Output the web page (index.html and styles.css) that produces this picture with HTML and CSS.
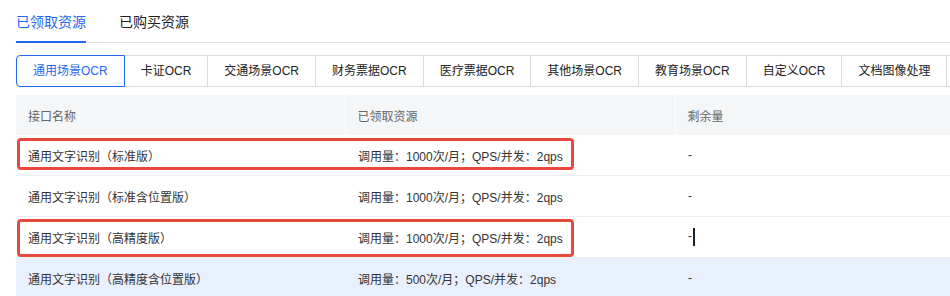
FILE: index.html
```html
<!DOCTYPE html>
<html lang="zh-CN">
<head>
    <meta charset="UTF-8">
    <title>资源管理</title>
    <link rel="stylesheet" href="styles.css">
</head>
<body>
    <div class="tabs">
        <div class="tab active">已领取资源</div>
        <div class="tab">已购买资源</div>
    </div>

    <div class="segments">
        <div class="seg active">通用场景OCR</div>
        <div class="seg">卡证OCR</div>
        <div class="seg">交通场景OCR</div>
        <div class="seg">财务票据OCR</div>
        <div class="seg">医疗票据OCR</div>
        <div class="seg">其他场景OCR</div>
        <div class="seg">教育场景OCR</div>
        <div class="seg">自定义OCR</div>
        <div class="seg">文档图像处理</div>
        <div class="seg seg-more"></div>
    </div>

    <div class="table-wrap">
        <table>
            <colgroup>
                <col class="c1">
                <col class="c2">
                <col class="c3">
            </colgroup>
            <tr>
                <th>接口名称</th>
                <th>已领取资源</th>
                <th>剩余量</th>
            </tr>
            <tr>
                <td>通用文字识别（标准版）</td>
                <td>调用量：1000次/月；QPS/并发：2qps</td>
                <td>-</td>
            </tr>
            <tr>
                <td>通用文字识别（标准含位置版）</td>
                <td>调用量：1000次/月；QPS/并发：2qps</td>
                <td>-</td>
            </tr>
            <tr>
                <td>通用文字识别（高精度版）</td>
                <td>调用量：1000次/月；QPS/并发：2qps</td>
                <td>-<span class="caret"></span></td>
            </tr>
            <tr class="hover">
                <td>通用文字识别（高精度含位置版）</td>
                <td>调用量：500次/月；QPS/并发：2qps</td>
                <td>-</td>
            </tr>
        </table>

        <!-- annotation boxes -->
        <div class="mark mark-1"></div>
        <div class="mark mark-2"></div>
    </div>
</body>
</html>
```

FILE: styles.css
```css
html, body {
    margin: 0;
    overflow: hidden;
}

body {
    width: 950px;
    height: 296px;
    padding-left: 16px;
    box-sizing: border-box;
    font-family: "Liberation Sans", "Noto Sans CJK SC", sans-serif;
    color: #333;
    background: #fff;
}

.tabs {
    display: flex;
    gap: 33px;
    width: 1000px;
    border-bottom: 1px solid #e4e4e4;
}

.tab {
    height: 43px;
    box-sizing: border-box;
    padding-top: 12px;
    margin-bottom: -1px;
    font-size: 14px;
    line-height: 20px;
    color: #222;
}

.tab.active {
    color: #2468f2;
    border-bottom: 2px solid #2468f2;
}

.segments {
    display: flex;
    margin-top: 12px;
    white-space: nowrap;
}

.seg {
    height: 32px;
    box-sizing: border-box;
    padding: 0 16px;
    margin-left: -1px;
    border: 1px solid #dcdcdc;
    font-size: 12px;
    line-height: 30px;
    color: #222;
    background: #fff;
}

.seg:first-child {
    margin-left: 0;
}

.seg.active {
    position: relative;
    z-index: 1;
    border-color: #2468f2;
    border-radius: 4px 0 0 4px;
    color: #2468f2;
}

.seg-more {
    width: 60px;
}

.table-wrap {
    position: relative;
    margin-top: 8px;
}

table {
    width: 1000px;
    table-layout: fixed;
    border-collapse: collapse;
    font-size: 12px;
}

.c1 { width: 329px; }
.c2 { width: 330px; }
.c3 { width: 341px; }

th, td {
    padding: 0 12px;
    text-align: left;
    white-space: nowrap;
}

th {
    height: 40px;
    font-weight: normal;
    color: #666;
    background: #f5f6f8;
}

th + th {
    border-left: 1px solid #fff;
}

td {
    height: 40px;
    border-bottom: 1px solid #eeeeee;
    color: #333;
}

td + td {
    padding-left: 13px;
}

tr.hover td {
    background: #e8f0fd;
    border-bottom: none;
}

.caret {
    display: inline-block;
    width: 2px;
    height: 18px;
    margin-left: 1px;
    vertical-align: middle;
    background: #1b2233;
}

.mark {
    position: absolute;
    left: 1px;
    width: 557px;
    box-sizing: border-box;
    border: 3px solid #e9483d;
    border-radius: 4px;
}

.mark-1 {
    top: 43px;
    height: 32px;
}

.mark-2 {
    top: 124px;
    height: 38px;
}
```
